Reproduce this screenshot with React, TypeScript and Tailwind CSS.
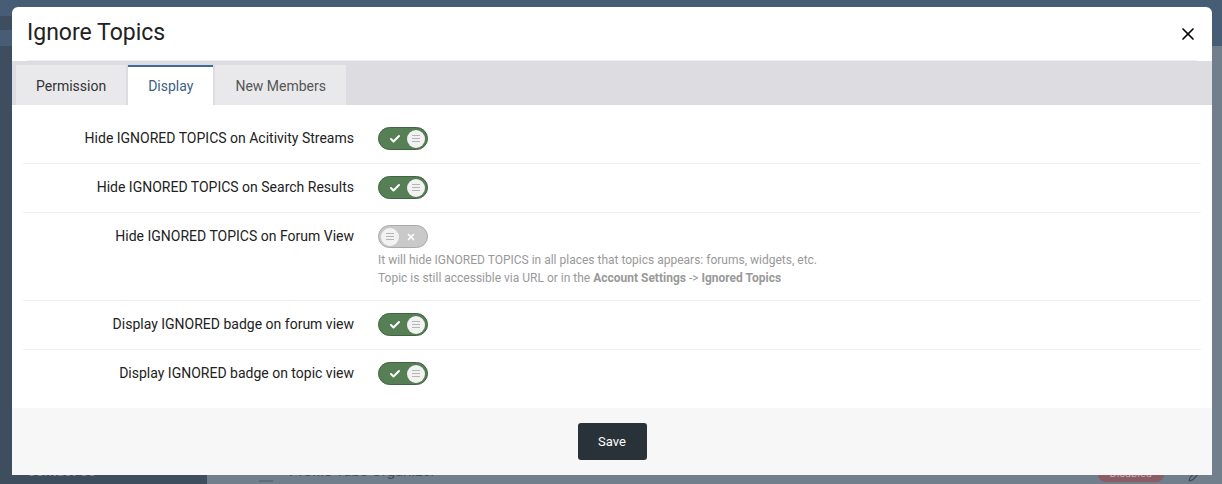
import { Check, X, Search, Grid2x2, CircleHelp, Pencil } from "lucide-react";

const rows = [
  { label: "Hide IGNORED TOPICS on Acitivity Streams", on: true },
  { label: "Hide IGNORED TOPICS on Search Results", on: true },
  { label: "Hide IGNORED TOPICS on Forum View", on: false, help: true },
  { label: "Display IGNORED badge on forum view", on: true },
  { label: "Display IGNORED badge on topic view", on: true },
];

const Knob = () => (
  <span className="flex h-[18px] w-[18px] flex-col items-center justify-center gap-[2px] rounded-full bg-[#f2f2f2]">
    <span className="h-px w-[8px] bg-[#b5b5b5]" />
    <span className="h-px w-[8px] bg-[#b5b5b5]" />
    <span className="h-px w-[8px] bg-[#b5b5b5]" />
  </span>
);

const Toggle = ({ on }: { on: boolean }) =>
  on ? (
    <div className="flex h-[23px] w-[50px] items-center justify-between rounded-full border border-[#3f6440] bg-[#567f56] pl-[10px] pr-[2px]">
      <Check size={12} strokeWidth={4} className="text-white" />
      <Knob />
    </div>
  ) : (
    <div className="flex h-[23px] w-[50px] items-center justify-between rounded-full border border-[#a9a9a9] bg-[#c9c9c9] pl-[2px] pr-[11px]">
      <Knob />
      <X size={10} strokeWidth={4} className="text-white" />
    </div>
  );

const App = () => {
  return (
    <div
      className="relative h-[484px] w-full overflow-hidden bg-[#717e8b]"
      style={{ fontFamily: "Roboto, 'Liberation Sans', sans-serif" }}
    >
      {/* page behind the dialog */}
      <div className="flex h-[46px] items-center bg-[#465d75] text-[#8fa0b2]">
        <div className="w-[207px] bg-[#3e4e5f] pl-[27px] text-[22px] leading-[14px]">System</div>
        <Search size={18} className="ml-[18px]" />
        <span className="ml-[14px] text-[14px]">Search for settings, members, etc.</span>
        <div className="ml-auto flex items-center gap-2 border-l border-[#566d84] px-4 text-[13px]">
          <Grid2x2 size={12} />
          Visit Site
        </div>
        <div className="flex items-center gap-2 border-l border-[#566d84] px-4 text-[13px]">
          <CircleHelp size={13} />
          Support
        </div>
      </div>
      <div className="flex h-[438px]">
        <div className="flex w-[207px] flex-col justify-end bg-[#3e4e5f] pb-[2px] pl-[27px] text-[14px] text-[#7e8d9c]">
          Contact Us
        </div>
        <div className="flex flex-1 items-end pb-[2px] pl-[52px] pr-[20px] text-[15px] text-[#3f4a55]">
          <span className="mr-[16px] h-[2px] w-[14px] bg-[#5f6b77]" />
          Profile Tabs Organizer
          <span className="ml-auto rounded-full bg-[#8a5d67] px-3 text-[11px] text-[#c8a8ae]">Disabled</span>
          <Pencil size={14} className="ml-6 text-[#3f4a55]" />
        </div>
      </div>

      {/* dialog */}
      <div className="absolute left-[12px] top-[7px] flex h-[468px] w-[1200px] flex-col overflow-hidden rounded-t-[6px] bg-white">
        <div className="flex h-[53px] items-center justify-between px-[15px]">
          <h2 className="text-[23px] text-[#222]">Ignore Topics</h2>
          <X size={20} strokeWidth={2} className="mr-[-1px] text-black" />
        </div>
        <div className="mx-[15px] h-px bg-[#ededed]" />
        <div className="flex h-[44px] items-end gap-[1px] bg-[#dddde1] pl-[4px]">
          <div className="flex h-[40px] items-center bg-[#e9e9ec] px-[20px] pt-[2px] text-[14px] text-[#333]">Permission</div>
          <div className="ml-[1px] flex h-[40px] items-center border-t-2 border-[#3d6a98] bg-white px-[20px] text-[14px] text-[#3d5f86]">
            Display
          </div>
          <div className="ml-[1px] flex h-[40px] items-center bg-[#e9e9ec] px-[20px] pt-[2px] text-[14px] text-[#555]">New Members</div>
        </div>
        <div className="flex-1 px-[11px] pt-[10px]">
          {rows.map((r, i) => (
            <div
              key={i}
              className={`flex items-start pt-[12px] ${i < rows.length - 1 ? "border-b border-[#efefef] pb-[13px]" : "pb-[13px]"}`}
            >
              <div className="w-[331px] text-right text-[14px] leading-[23px] text-[#222]">{r.label}</div>
              <div className="ml-[24px]">
                <Toggle on={r.on} />
                {r.help && (
                  <div className="mt-[3px] text-[12px] leading-[18px] text-[#999]">
                    <div>It will hide IGNORED TOPICS in all places that topics appears: forums, widgets, etc.</div>
                    <div>
                      Topic is still accessible via URL or in the <b>Account Settings</b> -&gt; <b>Ignored Topics</b>
                    </div>
                  </div>
                )}
              </div>
            </div>
          ))}
        </div>
        <div className="flex h-[67px] items-center justify-center bg-[#f7f7f7]">
          <button className="h-[37px] w-[69px] rounded-[3px] bg-[#283238] text-[13px] text-white">Save</button>
        </div>
      </div>
    </div>
  );
};

export default App;
